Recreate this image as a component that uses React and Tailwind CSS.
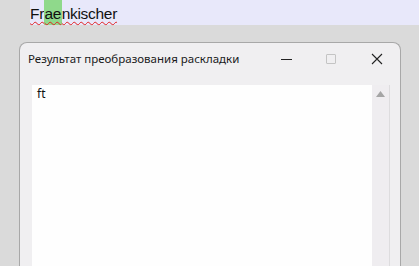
export default function App() {
  const wavy =
    "underline decoration-wavy decoration-[#e02020] decoration-1 underline-offset-[2px]"
  return (
    <div
      className="w-[419px] h-[266px] bg-[#dadada] overflow-hidden flex flex-col"
      style={{ fontFamily: '"Noto Sans", "Open Sans", sans-serif' }}
    >
      {/* editor line behind the dialog */}
      <div
        className="ml-[30px] h-[25px] bg-[#e8e8fa] flex items-stretch shrink-0 text-[15.5px] tracking-[-0.3px] text-[#111]"
        style={{ fontFamily: '"Liberation Sans", Arial, sans-serif' }}
      >
        <span className={`flex items-end pb-[4px] leading-none ${wavy}`}>Fr</span>
        <span className={`flex items-end pb-[4px] leading-none bg-[#8fd98b] px-[0.5px] ${wavy}`}>ae</span>
        <span className={`flex items-end pb-[4px] leading-none ${wavy}`}>nkischer</span>
      </div>

      {/* dialog window */}
      <div className="mt-[17px] ml-[19px] w-[382px] flex-1 rounded-t-[8px] border border-b-0 border-[#a8a8a8] bg-[#f0eff1] flex flex-col">
        <div className="h-[32px] flex items-center pl-[8px] shrink-0">
          <span className="text-[11.5px] text-[#1a1a1a] flex-1">
            Результат преобразования раскладки
          </span>
          <div className="flex items-center h-full">
            <div className="w-[44px] flex justify-center">
              <div className="w-[11px] h-px bg-[#222]" />
            </div>
            <div className="w-[46px] flex justify-center">
              <div className="w-[10px] h-[10px] border border-[#c4c4c4] rounded-[1px]" />
            </div>
            <div className="w-[46px] flex justify-center">
              <svg width="12" height="12" viewBox="0 0 12 12">
                <path d="M1 1L11 11M11 1L1 11" stroke="#222" strokeWidth="1.1" />
              </svg>
            </div>
          </div>
        </div>

        <div className="flex flex-1 pt-[10px] pl-[12px]">
          <div className="w-[340px] bg-[#fefefe] pl-[5px] text-[12px] leading-[18px] text-[#111]">
            ft
          </div>
          <div className="w-[17px] bg-[#efedf0] flex justify-center pt-[6px]">
            <svg width="9" height="6" viewBox="0 0 9 6">
              <path d="M4.5 0L9 6H0Z" fill="#a5a5a5" />
            </svg>
          </div>
          <div className="w-px bg-[#dddcde]" />
        </div>
      </div>
    </div>
  )
}
